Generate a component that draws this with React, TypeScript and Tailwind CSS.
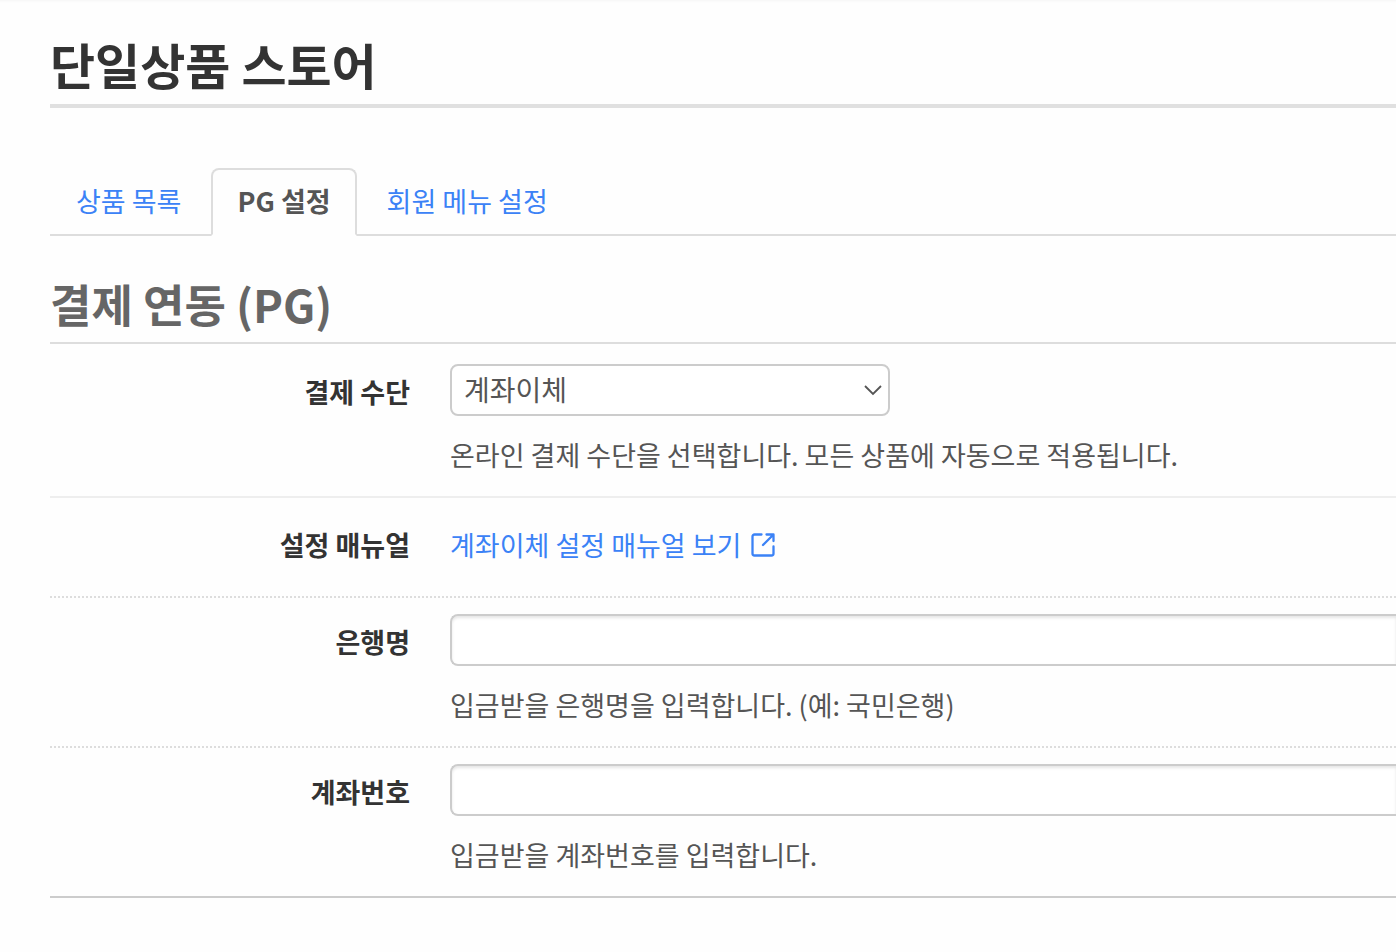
import type { ReactNode } from 'react';
import clsx from 'clsx';

const tabs = [
  { label: '상품 목록', href: '#products' },
  { label: 'PG 설정', href: '#pg', active: true },
  { label: '회원 메뉴 설정', href: '#member-menu' },
];

const bankFields = [
  { id: 'bank-name', label: '은행명', help: '입금받을 은행명을 입력합니다. (예: 국민은행)' },
  { id: 'account-number', label: '계좌번호', help: '입금받을 계좌번호를 입력합니다.' },
];

function ExternalLinkIcon() {
  return (
    <svg
      className="h-6 w-6"
      viewBox="0 0 24 24"
      fill="none"
      stroke="currentColor"
      strokeWidth="2.3"
      strokeLinecap="round"
      strokeLinejoin="round"
      aria-hidden="true"
    >
      <path d="M10.5 1.5H3.5a2 2 0 0 0-2 2v17a2 2 0 0 0 2 2h17a2 2 0 0 0 2-2V13.5" />
      <path d="M15.5 1.5h7v6.5M22 2 12 12" />
    </svg>
  );
}

function FormRow({ label, className, children }: { label: ReactNode; className?: string; children: ReactNode }) {
  return (
    <div className={clsx('flex gap-10', className)}>
      <div className="w-[360px] shrink-0 text-right font-bold text-[#333]">{label}</div>
      <div className="min-w-0 flex-1">{children}</div>
    </div>
  );
}

function HelpText({ id, children }: { id: string; children: ReactNode }) {
  return (
    <p id={id} className="mt-5 leading-[38px]">
      {children}
    </p>
  );
}

export default function App() {
  return (
    <div className="min-h-screen bg-[#fefefe] pl-[50px] pb-12 font-['Noto_Sans_CJK_KR',sans-serif] text-[27px] text-[#555] shadow-[inset_0_5px_3px_-4px_rgba(0,0,0,0.04)]">
      <header className="border-b-4 border-[#e0e0e0] pt-9 pb-3">
        <h1 className="text-[49px] leading-[56px] font-bold text-[#333]">단일상품 스토어</h1>
      </header>

      <nav className="mt-[60px] flex gap-1 border-b-2 border-[#ddd]">
        {tabs.map((tab) => (
          <a
            key={tab.href}
            href={tab.href}
            aria-current={tab.active ? 'page' : undefined}
            className={clsx(
              '-mb-[2px] rounded-t-lg border-2 px-6 pt-3 pb-[14px] leading-[38px]',
              tab.active
                ? 'border-[#ddd] border-b-[#fefefe] bg-[#fefefe] font-bold text-[#555]'
                : 'border-transparent text-[#3b82f6]',
            )}
          >
            {tab.label}
          </a>
        ))}
      </nav>

      <form>
        <h2 className="mt-10 border-b-2 border-[#ddd] pb-[10px] text-[45px] leading-[56px] font-bold text-[#666]">
          결제 연동 (PG)
        </h2>

        <FormRow
          className="border-b-2 border-[#eee] pt-5 pb-[22px]"
          label={
            <label htmlFor="payment-method" className="block leading-[56px]">
              결제 수단
            </label>
          }
        >
          <div className="relative w-[440px]">
            <select
              id="payment-method"
              aria-describedby="payment-method-help"
              className="block h-[52px] w-full appearance-none rounded-lg border-2 border-[#ccc] bg-white px-3 pb-[2px] text-[28px] leading-[38px] text-[#555]"
            >
              <option>계좌이체</option>
            </select>
            <svg
              className="pointer-events-none absolute top-5 right-[7px] h-3 w-5"
              viewBox="0 0 20 12"
              fill="none"
              stroke="#555"
              strokeWidth="1.8"
              aria-hidden="true"
            >
              <path d="M2 2l8 8 8-8" />
            </svg>
          </div>
          <HelpText id="payment-method-help">온라인 결제 수단을 선택합니다. 모든 상품에 자동으로 적용됩니다.</HelpText>
        </FormRow>

        <FormRow
          className="border-b-2 border-dotted border-[#ddd] pt-7 pb-8 leading-[38px]"
          label="설정 매뉴얼"
        >
          <a href="#manual" className="inline-flex items-center gap-[10px] text-[#3b82f6]">
            계좌이체 설정 매뉴얼 보기
            <ExternalLinkIcon />
          </a>
        </FormRow>

        {bankFields.map((field) => (
          <FormRow
            key={field.id}
            className="border-b-2 border-dotted border-[#ddd] pt-4 pb-[22px] last:border-solid last:border-[#ccc]"
            label={
              <label htmlFor={field.id} className="block leading-[56px]">
                {field.label}
              </label>
            }
          >
            <input
              id={field.id}
              type="text"
              aria-describedby={`${field.id}-help`}
              className="block h-[52px] w-full rounded-l-lg border-2 border-r-0 border-[#ccc] bg-white px-3 shadow-[inset_0_2px_3px_rgba(0,0,0,0.1)]"
            />
            <HelpText id={`${field.id}-help`}>{field.help}</HelpText>
          </FormRow>
        ))}
      </form>
    </div>
  );
}
